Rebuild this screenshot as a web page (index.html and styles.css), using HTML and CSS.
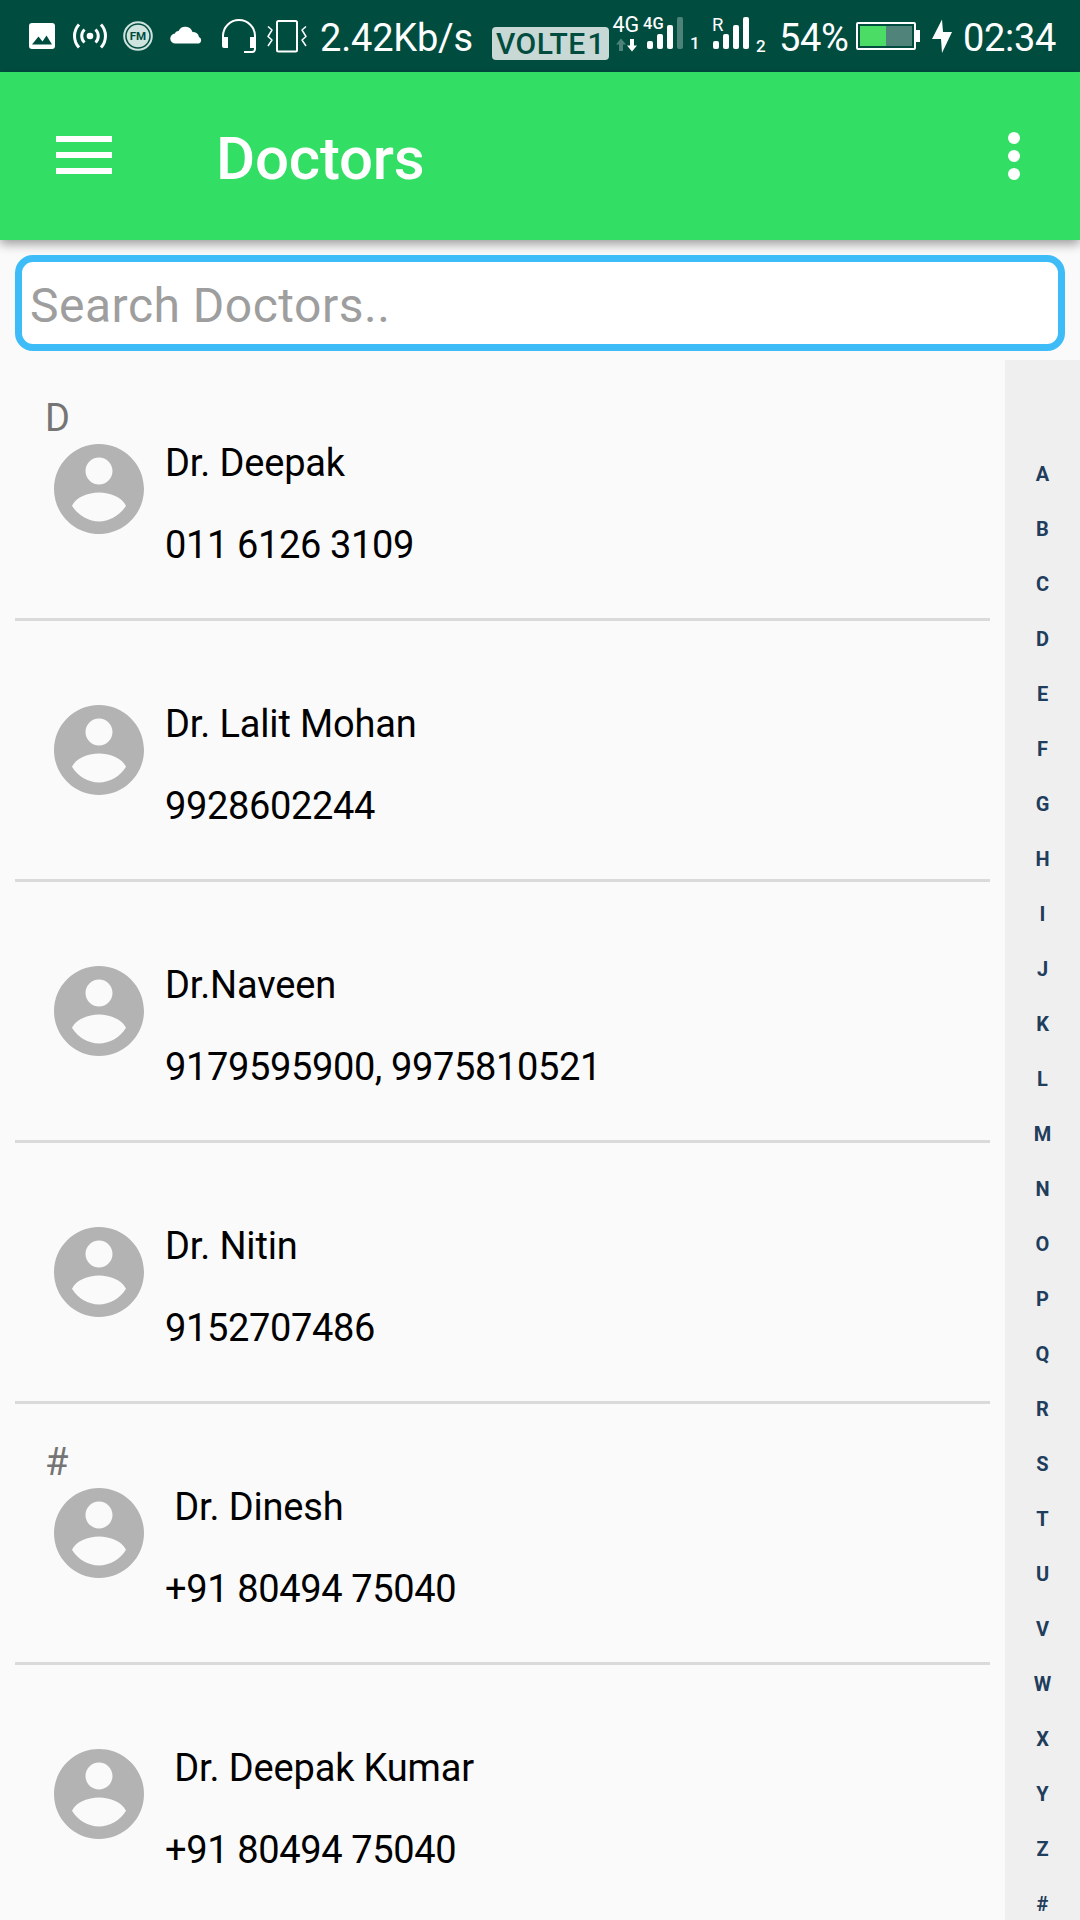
FILE: index.html
```html
<!DOCTYPE html>
<html lang="en">
<head>
  <meta charset="UTF-8">
  <title>Doctors</title>
  <link rel="stylesheet" href="styles.css">
</head>
<body>

<!-- Status bar -->
<div class="status-bar">
  <svg class="icon" width="64" height="72" viewBox="0 0 64 72">
    <rect x="29" y="23" width="26" height="26" rx="3" fill="#fff"/>
    <path d="M32 44.500l6.500-8 4 5 4-6 5.500 9z" fill="#004d40"/>
  </svg>
  <svg class="icon" width="52" height="72" viewBox="64 0 52 72" fill="none" stroke="#fff" stroke-width="3">
    <circle cx="90" cy="36" r="3.300" fill="#fff" stroke="none"/>
    <path d="M84.500 29.500a9 9 0 0 0 0 13M95.500 29.500a9 9 0 0 1 0 13M79 24.500a17 17 0 0 0 0 23M101 24.500a17 17 0 0 1 0 23"/>
  </svg>
  <svg class="icon" width="44" height="72" viewBox="116 0 44 72">
    <circle cx="138" cy="36" r="13.800" fill="none" stroke="#cfe3df" stroke-width="2"/>
    <circle cx="138" cy="36" r="11.300" fill="#cfe3df"/>
    <text x="138" y="40.300" class="fm-text">FM</text>
  </svg>
  <svg class="icon" width="54" height="72" viewBox="160 0 54 72">
    <path d="M175.500 43.500a5 5 0 0 1-.5-10q.5-2.500 3.500-2.500a7.500 7.500 0 0 1 14 1q5.500 0 6.500 5a3.500 3.500 0 0 1 0 6.500z" fill="#fff"/>
  </svg>
  <svg class="icon" width="48" height="72" viewBox="214 0 48 72">
    <path d="M223 39v-3a16 16 0 0 1 32 0v13q0 3-3 3h-8" fill="none" stroke="#fff" stroke-width="2"/>
    <path d="M222 37h6v11h-4q-2 0-2-2zM250 37h6v11h-6z" fill="#fff"/>
  </svg>
  <svg class="icon" width="58" height="72" viewBox="262 0 58 72" fill="none" stroke="#fff">
    <rect x="277" y="21" width="20" height="30.500" rx="1.500" stroke-width="2"/>
    <path d="M268 26.500l4 3.500-4 6.500 4 3.500-4 6M306 26.500l-4 3.500 4 6.500-4 3.500 4 6" stroke-width="1.500" stroke-linejoin="round"/>
  </svg>
  <span class="speed">2.42Kb/s</span>
  <span class="volte">VOLTE 1</span>
  <svg class="icon signal" width="169" height="72" viewBox="609 0 169 72" fill="#fff">
    <text x="612.500" y="32" font-size="21.500">4G</text>
    <text x="643" y="28.500" font-size="16.500" font-weight="500">4G</text>
    <path d="M621 38.500l5 6h-3v6.500h-4v-6.500h-3z" opacity=".3"/>
    <path d="M632 51.500l5-6h-3v-6.500h-4v6.500h-3z"/>
    <rect x="647" y="41" width="6" height="8" rx="2"/>
    <rect x="657" y="34" width="6" height="15" rx="2"/>
    <rect x="667" y="25" width="6" height="24" rx="2"/>
    <rect x="677" y="17" width="6" height="32" rx="2" opacity=".3"/>
    <text x="690" y="49" class="sim">1</text>
    <text x="712" y="30.500" font-size="18.500">R</text>
    <rect x="713" y="41" width="6" height="8" rx="2"/>
    <rect x="723" y="34" width="6" height="15" rx="2"/>
    <rect x="733" y="25" width="6" height="24" rx="2"/>
    <rect x="743" y="17" width="6" height="32" rx="2"/>
    <text x="756" y="52" class="sim">2</text>
  </svg>
  <span class="percent">54%</span>
  <svg class="icon" width="113" height="72" viewBox="850 0 113 72">
    <rect x="857" y="23" width="58" height="26" rx="1" fill="none" stroke="#fff" stroke-width="2"/>
    <rect x="860" y="26" width="26" height="20" fill="#4bdc65"/>
    <rect x="886" y="26" width="26" height="20" fill="#508379"/>
    <rect x="916" y="30" width="4" height="12" fill="#fff"/>
    <path d="M942 19.500l-10 19.500h9l1 14 10-21h-9z" fill="#fff"/>
  </svg>
  <span class="time">02:34</span>
</div>

<!-- Toolbar -->
<div class="toolbar">
  <svg class="menu-icon" width="56" height="38" viewBox="0 0 56 38" fill="#fff">
    <rect width="56" height="6"/>
    <rect y="16" width="56" height="6"/>
    <rect y="32" width="56" height="6"/>
  </svg>
  <h1>Doctors</h1>
  <svg class="more-icon" width="12" height="48" viewBox="0 0 12 48" fill="#fff">
    <circle cx="6" cy="6" r="6"/>
    <circle cx="6" cy="24" r="6"/>
    <circle cx="6" cy="42" r="6"/>
  </svg>
</div>

<input type="text" class="search" placeholder="Search Doctors..">

<div class="content">
  <div class="list" id="list">
    <!-- Rows will come here -->
  </div>
  <div class="index" id="index"></div>
</div>

<script>
const doctors = [
  { section: 'D', name: 'Dr. Deepak', phone: '011 6126 3109' },
  { section: '', name: 'Dr. Lalit Mohan', phone: '9928602244' },
  { section: '', name: 'Dr.Naveen', phone: '9179595900, 9975810521' },
  { section: '', name: 'Dr. Nitin', phone: '9152707486' },
  { section: '#', name: ' Dr. Dinesh', phone: '+91 80494 75040' },
  { section: '', name: ' Dr. Deepak Kumar', phone: '+91 80494 75040' }
];

// Doctor rows
const list = document.getElementById('list');
doctors.forEach(doctor => {
  list.innerHTML += `
    <div class="row">
      <div class="section">${doctor.section}</div>
      <div class="doctor">
        <svg class="avatar" viewBox="0 0 24 24">
          <path d="M12 2C6.480 2 2 6.480 2 12s4.480 10 10 10 10-4.480 10-10S17.520 2 12 2zm0 3c1.660 0 3 1.340 3 3s-1.340 3-3 3-3-1.340-3-3 1.340-3 3-3zm0 14.200c-2.400 0-4.700-1.400-6-3.500.9-1.800 3.500-2.900 6-2.900s5.100 1.100 6 2.900c-1.300 2.100-3.600 3.500-6 3.500z"/>
        </svg>
        <div class="info">
          <div class="name">${doctor.name}</div>
          <div class="phone">${doctor.phone}</div>
        </div>
      </div>
    </div>
  `;
});

// Alphabet index
document.getElementById('index').innerHTML =
  'ABCDEFGHIJKLMNOPQRSTUVWXYZ#'.split('').map(c => `<span>${c}</span>`).join('');
</script>

</body>
</html>
```
FILE: styles.css
```css
* {
  box-sizing: border-box;
}
body {
  margin: 0;
  width: 1080px;
  height: 1920px;
  overflow: hidden;
  display: flex;
  flex-direction: column;
  background: #fafafa;
  font-family: Roboto, sans-serif;
}

/* Status bar */
.status-bar {
  display: flex;
  flex: none;
  height: 72px;
  background: #004d40;
  color: #fff;
  font-size: 38px;
  line-height: 45px;
  white-space: nowrap;
}
.icon {
  flex: none;
}
.speed {
  width: 172px;
  padding-top: 16px;
  letter-spacing: -0.2px;
}
.volte {
  width: 117px;
  height: 33px;
  margin-top: 27px;
  border-radius: 4px;
  background: #c8d8d5;
  color: #004d40;
  font-size: 30px;
  font-weight: 500;
  line-height: 33px;
  text-align: center;
  letter-spacing: 0.4px;
  word-spacing: -6px;
}
.fm-text {
  font-size: 11.5px;
  font-weight: 700;
  fill: #004d40;
  text-anchor: middle;
}
.sim {
  font-size: 17px;
  font-weight: 500;
}
.percent {
  width: 71px;
  padding-top: 16px;
  margin-left: 1px;
  letter-spacing: -0.3px;
}
.time {
  padding-top: 16px;
  letter-spacing: -0.3px;
}

/* Toolbar */
.toolbar {
  display: flex;
  flex: none;
  align-items: flex-start;
  height: 168px;
  padding: 60px 60px 0 56px;
  background: #33de65;
  box-shadow: 0 4px 10px rgba(0,0,0,0.38);
}
.menu-icon {
  margin-top: 4px;
}
.toolbar h1 {
  flex: 1;
  margin: -8px 0 0 104px;
  color: #fff;
  font-size: 60px;
  font-weight: 500;
  line-height: 70px;
  letter-spacing: -0.2px;
}

.search {
  flex: none;
  position: relative;
  height: 96px;
  margin: 15px 15px 9px;
  padding: 5px 8px 0;
  border: 7px solid #3dbcf8;
  border-radius: 18px;
  background: #fff;
  font-family: Roboto, sans-serif;
  font-size: 48px;
  letter-spacing: 0.5px;
  outline: none;
}
.search::placeholder {
  color: #9e9e9e;
}

/* List */
.content {
  display: flex;
  flex: 1;
  min-height: 0;
}
.list {
  flex: 1;
  padding: 0 15px;
  font-size: 38px;
  line-height: 45px;
}
.row {
  height: 261px;
  padding: 36px 30px 0;
  border-bottom: 3px solid #dadada;
}
.section {
  height: 39px;
  color: #757575;
}
.doctor {
  display: flex;
}
.avatar {
  width: 108px;
  height: 108px;
  fill: #b3b3b3;
}
.info {
  padding: 6px 0 0 12px;
  color: #000;
}
.name {
  margin-bottom: 37px;
  white-space: pre;
  letter-spacing: -0.15px;
}
.phone {
  letter-spacing: -0.37px;
}

/* Alphabet index */
.index {
  display: flex;
  flex-direction: column;
  width: 75px;
  padding-top: 87px;
  background: #efefef;
  color: #1f3d5c;
  font-size: 20px;
  font-weight: 700;
  line-height: 55px;
  text-align: center;
}
```
